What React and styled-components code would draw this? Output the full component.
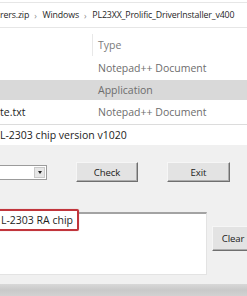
import React from 'react'
import styled, { createGlobalStyle } from 'styled-components'

const Global = createGlobalStyle`
  *, *::before, *::after { box-sizing: border-box; }
  html, body { margin: 0; padding: 0; background: #ffffff; }
  body { width: 247px; height: 296px; overflow: hidden; font-family: "Open Sans", "Noto Sans", sans-serif; }
`

const Page = styled.div`
  width: 247px;
  height: 296px;
  display: flex;
  flex-direction: column;
  overflow: hidden;
`

const Crumbs = styled.div`
  height: 26px;
  margin-top: 2px;
  border-top: 1px solid #e6e6e6;
  border-bottom: 1px solid #e6e6e6;
  display: flex;
  align-items: center;
  font-size: 8.8px;
  letter-spacing: -0.15px;
  color: #262626;
  white-space: nowrap;
`

const Sep = styled.span`
  color: #8a8a8a;
  font-size: 8.5px;
  padding: 0 6px 0 5px;
`

const List = styled.div`
  display: flex;
  flex-direction: column;
  padding-top: 6px;
`

const Row = styled.div`
  height: ${p => p.$h || 22}px;
  display: grid;
  grid-template-columns: 92px 1fr;
  align-items: center;
  background: ${p => (p.$selected ? '#d9d9d9' : 'transparent')};
  font-size: 10.5px;
  white-space: nowrap;
`

const Name = styled.span`
  color: #1e1e1e;
`

const TypeCell = styled.span`
  height: 100%;
  display: flex;
  align-items: center;
  padding-left: 5px;
  color: ${p => (p.$head ? '#7a7a7a' : '#6d6d6d')};
  border-left: 1px solid ${p => (p.$head ? '#e8e8e8' : 'transparent')};
`

const Dialog = styled.div`
  flex: 1;
  display: flex;
  flex-direction: column;
  border-top: 1px solid #dcdcdc;
  background: #f0f0f0;
`

const Title = styled.div`
  height: 20px;
  background: #ffffff;
  display: flex;
  align-items: center;
  font-size: 10.5px;
  color: #1c1c1c;
  white-space: nowrap;
`

const Controls = styled.div`
  display: flex;
  align-items: center;
  margin-top: 17px;
  height: 20px;
`

const Combo = styled.div`
  width: 47px;
  height: 15px;
  background: #ffffff;
  border: 1px solid #9b9b9b;
  border-left: none;
  display: flex;
  justify-content: flex-end;
  align-items: center;
  padding: 1px;
`

const ComboArrow = styled.div`
  width: 11px;
  height: 11px;
  background: #e6e6e6;
  border: 1px solid #c9c9c9;
  display: flex;
  align-items: center;
  justify-content: center;
  &::after {
    content: '';
    border-left: 2.5px solid transparent;
    border-right: 2.5px solid transparent;
    border-top: 3px solid #222;
  }
`

const Button = styled.button`
  flex: none;
  width: ${p => p.$w}px;
  height: ${p => p.$h || 20}px;
  margin-left: ${p => p.$ml || 0}px;
  margin-top: ${p => p.$mt || 0}px;
  padding: 0;
  background: #e3e3e3;
  border-style: solid;
  border-width: 1px;
  border-color: #f6f6f6 #6f6f6f #6f6f6f #f6f6f6;
  box-shadow: inset -1px -1px 0 #adadad;
  font-family: "Open Sans", "Noto Sans", sans-serif;
  font-size: 9.6px;
  letter-spacing: -0.1px;
  color: #222;
  text-align: center;
  white-space: nowrap;
`

const Output = styled.div`
  display: flex;
  align-items: flex-start;
  margin-top: 30px;
`

const TextBox = styled.div`
  position: relative;
  flex: none;
  width: 207px;
  height: 63px;
  background: #ffffff;
  border-top: 2px solid #a3a3a3;
  border-right: 1px solid #e3e3e3;
  border-bottom: 1px solid #e3e3e3;
`

const Highlight = styled.span`
  position: absolute;
  left: -3px;
  top: -5px;
  height: 22px;
  display: flex;
  align-items: center;
  padding: 0 4px 0 2px;
  border: 2px solid #c1353c;
  border-radius: 2px;
  font-size: 10.5px;
  color: #1e1e1e;
  white-space: nowrap;
  background: #ffffff;
  box-shadow: 0 0 1px rgba(193, 53, 60, 0.5);
`

const Bottom = styled.div`
  margin-top: auto;
  height: 12px;
  background: linear-gradient(#d8d8d8, #c9c9c9 50%, #d2d2d2);
`

export default function App() {
  return (
    <Page>
      <Global />
      <Crumbs>
        <span>rers.zip</span>
        <Sep>›</Sep>
        <span>Windows</span>
        <Sep>›</Sep>
        <span>PL23XX_Prolific_DriverInstaller_v400</span>
      </Crumbs>
      <List>
        <Row>
          <span />
          <TypeCell $head>Type</TypeCell>
        </Row>
        <Row $h={24}>
          <span />
          <TypeCell>Notepad++ Document</TypeCell>
        </Row>
        <Row $h={20} $selected>
          <span />
          <TypeCell>Application</TypeCell>
        </Row>
        <Row $h={24}>
          <Name>te.txt</Name>
          <TypeCell>Notepad++ Document</TypeCell>
        </Row>
      </List>
      <Dialog>
        <Title>L-2303 chip version v1020</Title>
        <Controls>
          <Combo>
            <ComboArrow />
          </Combo>
          <Button $w={62} $ml={29}>Check</Button>
          <Button $w={63} $ml={29}>Exit</Button>
        </Controls>
        <Output>
          <TextBox>
            <Highlight>L-2303 RA chip</Highlight>
          </TextBox>
          <Button $w={42} $h={25} $ml={5} $mt={14}>Clear</Button>
        </Output>
        <Bottom />
      </Dialog>
    </Page>
  )
}
